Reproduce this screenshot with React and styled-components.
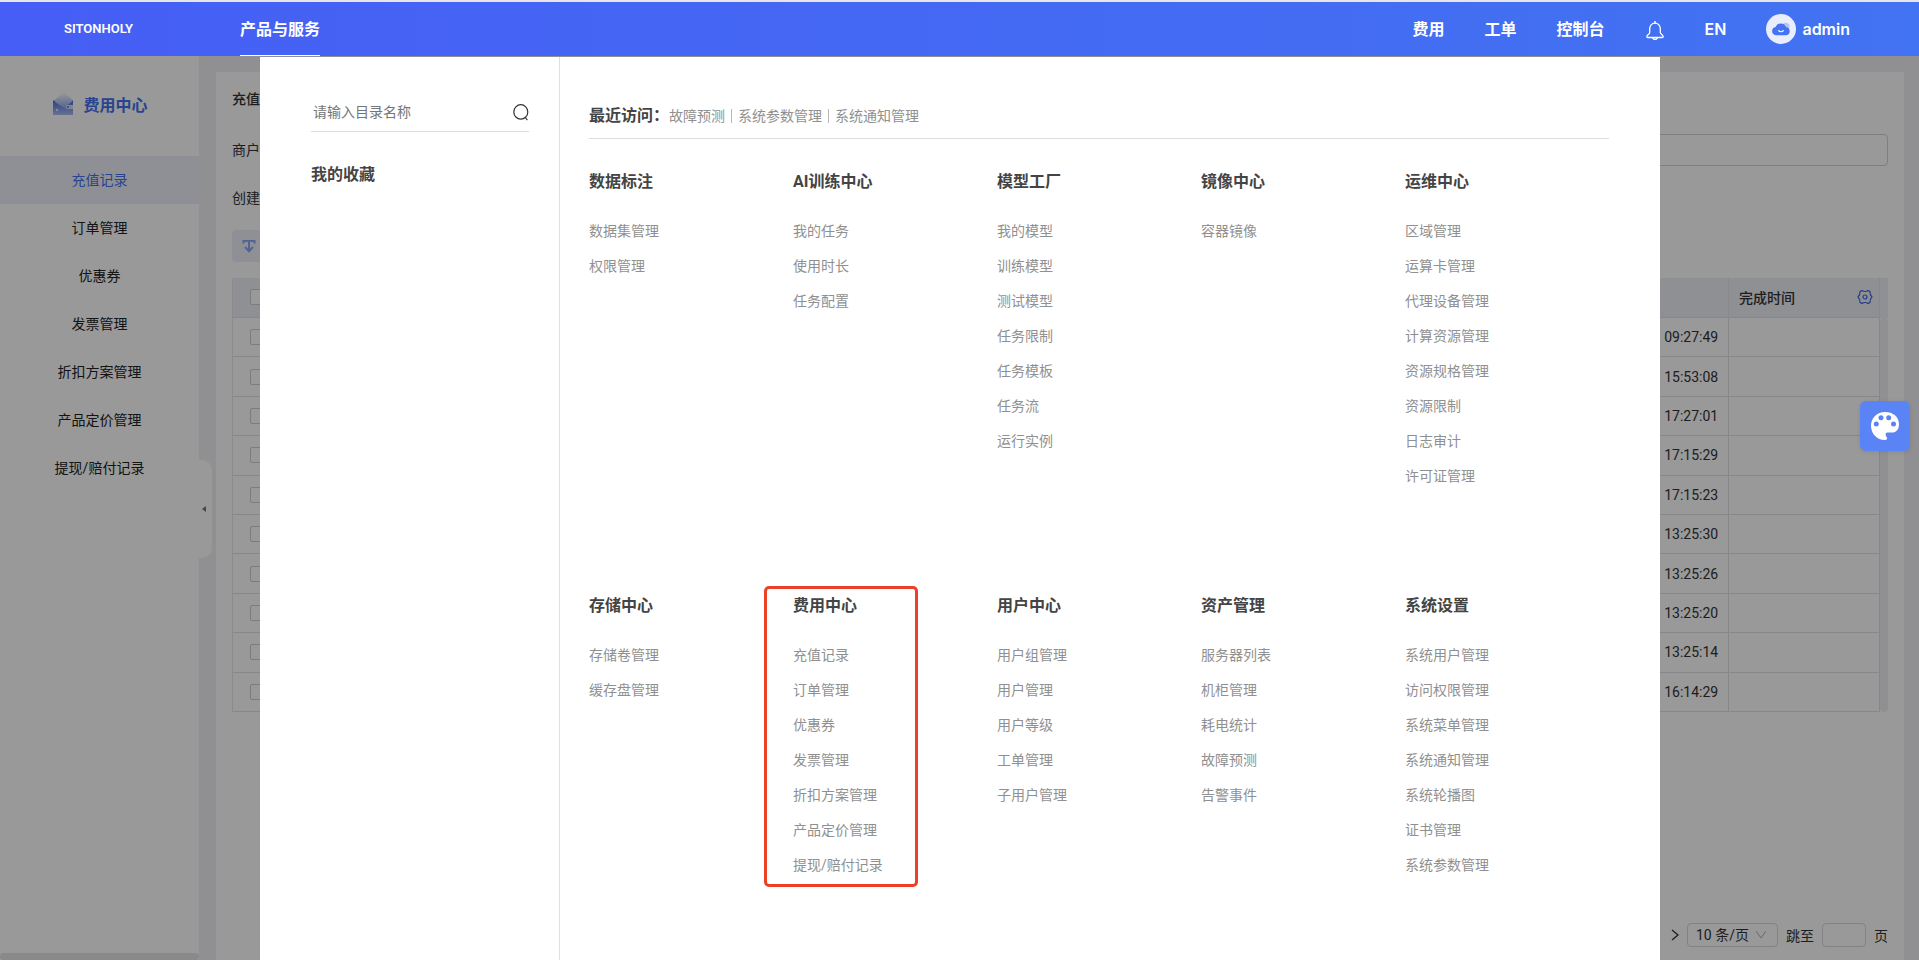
import React from 'react';
import styled, { createGlobalStyle } from 'styled-components';

const sideMenu = [
  '充值记录',
  '订单管理',
  '优惠券',
  '发票管理',
  '折扣方案管理',
  '产品定价管理',
  '提现/赔付记录',
];

const records = [
  '2023-10-11 09:27:49',
  '2023-10-11 15:53:08',
  '2023-10-11 17:27:01',
  '2023-10-11 17:15:29',
  '2023-10-11 17:15:23',
  '2023-10-11 13:25:30',
  '2023-10-11 13:25:26',
  '2023-10-11 13:25:20',
  '2023-10-11 13:25:14',
  '2023-08-03 16:14:29',
];

const recent = ['故障预测', '系统参数管理', '系统通知管理'];

const catalog = [
  { title: '数据标注', items: ['数据集管理', '权限管理'] },
  { title: 'AI训练中心', items: ['我的任务', '使用时长', '任务配置'] },
  {
    title: '模型工厂',
    items: [
      '我的模型',
      '训练模型',
      '测试模型',
      '任务限制',
      '任务模板',
      '任务流',
      '运行实例',
    ],
  },
  { title: '镜像中心', items: ['容器镜像'] },
  {
    title: '运维中心',
    items: [
      '区域管理',
      '运算卡管理',
      '代理设备管理',
      '计算资源管理',
      '资源规格管理',
      '资源限制',
      '日志审计',
      '许可证管理',
    ],
  },
  { title: '存储中心', items: ['存储卷管理', '缓存盘管理'] },
  { title: '费用中心', items: sideMenu, marked: true },
  {
    title: '用户中心',
    items: ['用户组管理', '用户管理', '用户等级', '工单管理', '子用户管理'],
  },
  {
    title: '资产管理',
    items: ['服务器列表', '机柜管理', '耗电统计', '故障预测', '告警事件'],
  },
  {
    title: '系统设置',
    items: [
      '系统用户管理',
      '访问权限管理',
      '系统菜单管理',
      '系统通知管理',
      '系统轮播图',
      '证书管理',
      '系统参数管理',
    ],
  },
];

const BellIcon = () => (
  <svg width="20" height="20" viewBox="0 0 20 20" fill="none" stroke="#fff">
    <path
      d="M10 2.2c-3.3 0-5.3 2.5-5.3 5.6v3.6c0 1.6-2.9 2.6-2.9 4.2 0 .6.4.9 1 .9h14.4c.6 0 1-.3 1-.9 0-1.600-2.900-2.600-2.900-4.200V7.800c0-3.100-2-5.600-5.300-5.600z"
      strokeWidth="1.3"
      strokeLinejoin="round"
    />
    <path d="M10 .6v1.600M8 17.200c.4 1.500 3.600 1.500 4 0" strokeWidth="1.500" strokeLinecap="round" />
  </svg>
);

const AvatarIcon = () => (
  <svg width="30" height="30" viewBox="0 0 30 30">
    <circle cx="15" cy="15" r="15" fill="#e9edfe" />
    <circle cx="19.800" cy="12.300" r="3.600" fill="#b5c5fb" />
    <path
      d="M10 21.200a4.100 4.100 0 0 1-.4-8.150A5.600 5.600 0 0 1 20 12.900a4.200 4.200 0 0 1 .3 8.300z"
      fill="#4673f1"
    />
    <path d="M12.800 16.600c1 1.500 3.400 1.500 4.400 0" fill="none" stroke="#fff" strokeWidth="1.200" strokeLinecap="round" />
  </svg>
);

const WalletIcon = () => (
  <svg width="20" height="22" viewBox="0 0 20 22">
    <defs>
      <linearGradient id="paper" x1="0" y1="0" x2="0" y2="1">
        <stop offset="0" stopColor="#fbfbff" />
        <stop offset="1" stopColor="#8ea9f0" />
      </linearGradient>
      <linearGradient id="wallet" x1="0" y1="0" x2="0" y2="1">
        <stop offset="0" stopColor="#4a70d8" />
        <stop offset="1" stopColor="#aebcf5" />
      </linearGradient>
    </defs>
    <path d="M0 7.500h20V22H0z" fill="url(#wallet)" />
    <path d="M2 6.500 10 0h2l7 6.500v2L11 15 2 9z" fill="url(#paper)" />
    <path d="M20 12h-5.500a2 2 0 0 0 0 4H20z" fill="#d5dcf8" />
    <circle cx="15" cy="14" r="1" fill="#4a70d8" />
    <circle cx="4" cy="17" r="1" fill="#fff" />
  </svg>
);

const SearchIcon = () => (
  <svg width="16" height="17" viewBox="0 0 16 17" fill="none" stroke="#333" strokeWidth="1.200">
    <ellipse cx="7.800" cy="7.900" rx="7" ry="7.200" />
    <path d="m12.300 13.500 2 2.600" />
  </svg>
);

const DownloadIcon = () => (
  <svg width="14" height="14" viewBox="0 0 14 14" fill="none" stroke="#8ca6f5" strokeWidth="2">
    <path d="M1.500 4.500V2h11v2.500M7 3v9M3 8l4 4.300L11 8" />
  </svg>
);

const GearIcon = () => (
  <svg width="16" height="16" viewBox="0 0 16 16" fill="none" stroke="#3d66e0" strokeWidth="1.200">
    <path
      d="M5 1.500c1 .9 1.800 1 3 1s2-.1 3-1l2 1.100c-.2 2.300.5 3.900 2 5.400-1.500 1.500-2.200 3.100-2 5.400l-2 1.100c-1-.9-1.800-1-3-1s-2 .1-3 1l-2-1.100c.2-2.300-.5-3.900-2-5.400 1.500-1.500 2.200-3.100 2-5.400z"
      strokeLinejoin="round"
    />
    <circle cx="8" cy="8" r="2" />
  </svg>
);

const PaletteIcon = () => (
  <svg width="28" height="28" viewBox="0 0 28 28">
    <path
      d="M14 0C6 0 0 6 0 13.700 0 21.500 5.700 28 14 28c1.700 0 2.600-1.200 1.800-2.700-.7-1.300-1.200-2.200-1.200-3.100 0-1.100.8-1.600 2-1.600h4.600c4 0 6.800-3.300 6.800-8.400C28 4.800 22 0 14 0z"
      fill="#fff"
    />
    <g fill="#5a84f5">
      <circle cx="5.300" cy="12" r="2.500" />
      <circle cx="10" cy="5.700" r="2.500" />
      <circle cx="17.700" cy="5.700" r="2.500" />
      <circle cx="22.500" cy="12" r="2.500" />
    </g>
  </svg>
);

const App = () => {
  return (
    <Page>
      <GlobalStyle />
      <Header>
        <Logo href="#">SITONHOLY</Logo>
        <ProductLink href="#">产品与服务</ProductLink>
        <HeaderNav>
          <NavLink href="#">费用</NavLink>
          <NavLink href="#">工单</NavLink>
          <NavLink href="#">控制台</NavLink>
          <BellButton type="button" aria-label="通知">
            <BellIcon />
          </BellButton>
          <NavLink href="#">EN</NavLink>
          <UserLink href="#">
            <AvatarIcon />
            admin
          </UserLink>
        </HeaderNav>
      </Header>

      <Main>
        <Sidebar>
          <SideTitle>
            <WalletIcon />
            费用中心
          </SideTitle>
          <SideNav>
            {sideMenu.map((item, index) => (
              <SideLink key={item} href="#" $active={index === 0}>
                {item}
              </SideLink>
            ))}
          </SideNav>
          <SideScroll />
          <CollapseButton type="button" aria-label="收起菜单">
            <Triangle />
          </CollapseButton>
        </Sidebar>

        <Content>
          <Card>
            <CardTitle>充值记录</CardTitle>
            <Filters>
              <FilterRow>
                <FilterLabel htmlFor="merchant">商户</FilterLabel>
                <FilterInput id="merchant" />
              </FilterRow>
              <FilterRow>
                <FilterLabel htmlFor="created">创建</FilterLabel>
                <DateInput id="created" />
              </FilterRow>
              <ExportButton type="button" aria-label="导出">
                <DownloadIcon />
              </ExportButton>
            </Filters>
            <TableWrap>
              <Table>
                <thead>
                  <tr>
                    <Th $width={54}>
                      <Checkbox type="checkbox" aria-label="全选" />
                    </Th>
                    <Th />
                    <Th $width={151} />
                    <Th $width={151}>
                      <ThInner>
                        完成时间
                        <IconButton type="button" aria-label="列设置">
                          <GearIcon />
                        </IconButton>
                      </ThInner>
                    </Th>
                  </tr>
                </thead>
                <tbody>
                  {records.map((time) => (
                    <tr key={time}>
                      <Td>
                        <Checkbox type="checkbox" aria-label={time} />
                      </Td>
                      <Td />
                      <TimeTd>{time}</TimeTd>
                      <Td />
                    </tr>
                  ))}
                </tbody>
              </Table>
              <TableScroll>
                <ScrollTrack />
              </TableScroll>
            </TableWrap>
            <Pagination>
              <IconButton type="button" aria-label="下一页">
                <svg width="8" height="12" viewBox="0 0 8 12" fill="none" stroke="#333" strokeWidth="1.300">
                  <path d="m1 1 6 5-6 5" />
                </svg>
              </IconButton>
              <SelectWrap>
                <PageSize aria-label="每页条数">
                  <option>10 条/页</option>
                </PageSize>
                <svg width="10" height="8" viewBox="0 0 10 8" fill="none" stroke="#b0b0b0">
                  <path d="m0 0 5 7 5-7" />
                </svg>
              </SelectWrap>
              <label htmlFor="jump">跳至</label>
              <JumpInput id="jump" />
              <span>页</span>
            </Pagination>
          </Card>
        </Content>

        <Mask />
        <MegaMenu>
          <MenuSide>
            <SearchBox>
              <SearchInput aria-label="搜索目录" placeholder="请输入目录名称" />
              <IconButton type="button" aria-label="搜索">
                <SearchIcon />
              </IconButton>
            </SearchBox>
            <MenuHeading>我的收藏</MenuHeading>
          </MenuSide>
          <MenuBody>
            <Recent>
              <MenuHeading>最近访问：</MenuHeading>
              {recent.map((item) => (
                <RecentLink key={item} href="#">
                  {item}
                </RecentLink>
              ))}
            </Recent>
            <CatalogGrid>
              {catalog.map((group) => (
                <Group key={group.title}>
                  {group.marked && <Marker />}
                  <MenuHeading>{group.title}</MenuHeading>
                  <GroupList>
                    {group.items.map((item) => (
                      <li key={item}>
                        <GroupLink href="#">{item}</GroupLink>
                      </li>
                    ))}
                  </GroupList>
                </Group>
              ))}
            </CatalogGrid>
          </MenuBody>
        </MegaMenu>
        <ThemeButton type="button" aria-label="主题">
          <PaletteIcon />
        </ThemeButton>
      </Main>
    </Page>
  );
};

const GlobalStyle = createGlobalStyle`
  * {
    box-sizing: border-box;
  }

  body {
    margin: 0;
    font-family: Roboto, 'Noto Sans CJK SC', sans-serif;
    font-size: 14px;
    color: #333;
  }

  a {
    text-decoration: none;
    color: inherit;
  }

  button, input, select {
    font: inherit;
    color: inherit;
  }

  h1, h2, ul {
    margin: 0;
    padding: 0;
  }

  ul {
    list-style: none;
  }
`;

const Page = styled.div`
  display: flex;
  flex-direction: column;
  height: 100vh;
  overflow: hidden;
`;

const Header = styled.header`
  display: flex;
  flex-shrink: 0;
  height: 56px;
  padding: 0 69px 0 64px;
  border-top: 2px solid #e6e6e8;
  background: linear-gradient(90deg, #465ef5, #4273f2);
  background-origin: border-box;
  color: #fff;
  font-family: Inter, 'Noto Sans CJK SC', sans-serif;
  font-size: 16px;
  font-weight: 600;
`;

const Logo = styled.a`
  width: 176px;
  line-height: 54px;
  font-family: Roboto, sans-serif;
  font-size: 13px;
`;

const ProductLink = styled.a`
  padding-top: 2px;
  line-height: 51px;
  border-bottom: 1px solid #fff;
`;

const HeaderNav = styled.nav`
  display: flex;
  align-items: center;
  gap: 40px;
  margin-left: auto;
`;

const NavLink = styled.a`
  line-height: 24px;
`;

const UserLink = styled.a`
  display: flex;
  align-items: center;
  gap: 6px;
`;

const IconButton = styled.button`
  display: flex;
  padding: 0;
  border: 0;
  background: none;
  cursor: pointer;
`;

const BellButton = styled(IconButton)`
  padding-top: 4px;
`;

const Main = styled.div`
  position: relative;
  display: flex;
  flex: 1;
  min-height: 0;
`;

const Sidebar = styled.aside`
  position: relative;
  display: flex;
  flex-direction: column;
  flex-shrink: 0;
  width: 199px;
  background: #fff;
`;

const SideTitle = styled.h1`
  display: flex;
  align-items: center;
  justify-content: center;
  gap: 10px;
  height: 100px;
  padding: 0 0 4px 2px;
  font-size: 16px;
  font-weight: 700;
  color: #4470f0;
`;

const SideNav = styled.nav`
  display: flex;
  flex-direction: column;
  flex: 1;
`;

const SideLink = styled.a`
  line-height: 48px;
  text-align: center;
  color: ${(props) => (props.$active ? '#4470f0' : '#222')};
  background: ${(props) => (props.$active ? '#eef1f9' : 'none')};
`;

const SideScroll = styled.div`
  height: 7px;
  border-radius: 4px;
  background: #e4e4e4;
`;

const CollapseButton = styled.button`
  position: absolute;
  top: 404px;
  left: 100%;
  width: 13px;
  height: 98px;
  padding: 0 0 0 3px;
  border: 0;
  border-radius: 0 10px 10px 0;
  background: #fff;
`;

const Triangle = styled.span`
  display: block;
  width: 4px;
  border: 3px solid transparent;
  border-left: 0;
  border-right: 4px solid #777;
`;

const Content = styled.main`
  display: flex;
  flex: 1;
  min-width: 0;
  padding: 16px 15px 0 17px;
  background: #f0f0f3;
`;

const Card = styled.section`
  display: flex;
  flex-direction: column;
  flex: 1;
  padding: 0 16px 13px;
  background: #fff;
`;

const CardTitle = styled.h2`
  font-size: 14px;
  font-weight: 500;
  line-height: 54px;
`;

const Filters = styled.div`
  display: flex;
  flex-direction: column;
  gap: 16px;
  padding: 8px 0 16px;
`;

const FilterRow = styled.div`
  display: flex;
  align-items: center;
  gap: 12px;
  height: 32px;
`;

const FilterLabel = styled.label`
  padding-bottom: 2px;
`;

const FilterInput = styled.input`
  flex: 1;
  height: 32px;
  border: 1px solid #d4d4d8;
  border-radius: 4px;
`;

const DateInput = styled(FilterInput)`
  flex: none;
  width: 240px;
`;

const ExportButton = styled.button`
  width: 80px;
  height: 32px;
  padding: 3px 10px 0;
  border: 0;
  border-radius: 4px;
  background: #eef0f9;
  text-align: left;
`;

const TableWrap = styled.div`
  display: flex;
`;

const Table = styled.table`
  flex: 1;
  height: 434px;
  border-collapse: separate;
  border-spacing: 0;
  border-left: 1px solid #e8e8ea;
  table-layout: fixed;
`;

const Th = styled.th`
  width: ${(props) => (props.$width ? `${props.$width}px` : 'auto')};
  height: 40px;
  padding: 0 6px 2px 10px;
  border-bottom: 1px solid #e2e3e8;
  border-right: 1px solid #e4e5ec;
  background: #eff0f7;
  font-weight: 500;
  text-align: left;
`;

const ThInner = styled.div`
  display: flex;
  align-items: center;
  justify-content: space-between;
`;

const Td = styled.td`
  padding: 0 10px;
  border-bottom: 1px solid #e2e2e4;
  border-right: 1px solid #e2e2e4;
`;

const TimeTd = styled(Td)`
  padding: 0 0 0 12px;
  white-space: nowrap;
`;

const Checkbox = styled.input`
  display: block;
  width: 16px;
  height: 16px;
  margin: 0 0 0 7px;
  appearance: none;
  border: 1px solid #cfcfcf;
  border-radius: 2px;
  background: #fff;
`;

const TableScroll = styled.div`
  display: flex;
  width: 8px;
  padding-top: 40px;
  background: linear-gradient(#eff0f7 40px, transparent 40px);
`;

const ScrollTrack = styled.div`
  flex: 1;
  border-radius: 4px;
  background: #f0f0f3;
`;

const Pagination = styled.div`
  display: flex;
  align-items: center;
  justify-content: flex-end;
  gap: 8px;
  margin-top: auto;
`;

const SelectWrap = styled.div`
  display: flex;
  align-items: center;
  width: 91px;
  height: 24px;
  padding: 0 11px 0 8px;
  border: 1px solid #dadada;
  border-radius: 4px;
`;

const PageSize = styled.select`
  flex: 1;
  min-width: 0;
  padding: 0;
  border: 0;
  background: none;
  appearance: none;
`;

const JumpInput = styled.input`
  width: 44px;
  height: 24px;
  border: 1px solid #dadada;
  border-radius: 4px;
`;

const Mask = styled.div`
  position: absolute;
  inset: 0;
  background: rgba(0, 0, 0, 0.4);
`;

const MegaMenu = styled.div`
  position: absolute;
  top: 1px;
  bottom: 0;
  left: 260px;
  right: 259px;
  display: flex;
  overflow: hidden;
  background: #fff;
`;

const MenuSide = styled.div`
  width: 300px;
  padding: 36px 30px 0 51px;
  border-right: 1px solid #e0e0e0;
`;

const SearchBox = styled.div`
  display: flex;
  align-items: center;
  height: 39px;
  margin-bottom: 31px;
  border-bottom: 1px solid #ddd;
`;

const SearchInput = styled.input`
  flex: 1;
  min-width: 0;
  padding: 0 2px;
  border: 0;
  outline: none;

  &::placeholder {
    color: #757575;
  }
`;

const MenuHeading = styled.h2`
  font-size: 16px;
  font-weight: 700;
  line-height: 24px;
  color: #444;
`;

const MenuBody = styled.div`
  flex: 1;
  padding: 46px 51px 0 29px;
`;

const Recent = styled.div`
  display: flex;
  align-items: center;
  height: 36px;
  padding-bottom: 10px;
  border-bottom: 1px solid #ddd;
`;

const RecentLink = styled.a`
  line-height: 14px;
  color: #909090;

  & + & {
    margin-left: 6px;
    padding-left: 6px;
    border-left: 1px solid #bbb;
  }
`;

const CatalogGrid = styled.div`
  display: grid;
  grid-template-columns: repeat(5, 1fr);
  grid-auto-rows: minmax(424px, auto);
  padding-top: 31px;
`;

const Group = styled.div`
  position: relative;
`;

const GroupList = styled.ul`
  padding-top: 20px;
`;

const GroupLink = styled.a`
  display: block;
  line-height: 35px;
  color: #909090;
`;

const Marker = styled.div`
  position: absolute;
  top: -8px;
  left: -29px;
  width: 154px;
  height: 301px;
  border: 3px solid #ec4127;
  border-radius: 5px;
`;

const ThemeButton = styled.button`
  position: absolute;
  top: 345px;
  right: 9px;
  display: flex;
  align-items: center;
  justify-content: center;
  width: 50px;
  height: 50px;
  padding: 0;
  border: 0;
  border-radius: 6px;
  background: #5a84f5;
  box-shadow: 0 1px 4px rgba(0, 0, 0, 0.1);
`;

export default App;
